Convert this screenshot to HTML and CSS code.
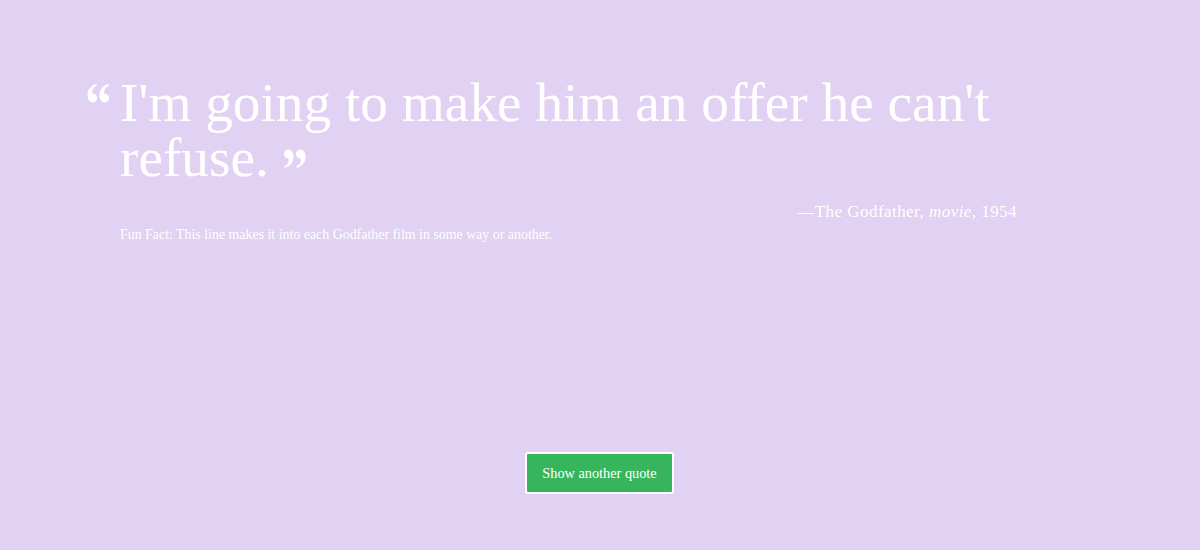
FILE: index.html
```html
<!DOCTYPE html>
<html>
<head>
<meta charset="utf-8">
<link rel="stylesheet" href="styles.css">
</head>
<body>
<main class="page">
  <section class="quote-box">
    <div class="quote-row">
      <svg class="q-left" viewBox="0 0 22 18" width="23" height="19"><path fill="#fff" d="M5 7.5C5 4.5 7 2.5 9.5 1.5L8.7 0C4 1.6 0.5 5 0.5 10.5C0.5 14.8 2.5 17.5 5.3 17.5C7.8 17.5 9.6 15.7 9.6 13.3C9.6 10.9 7.9 9.2 5.6 9.2C5.3 9.2 5 9.25 5 9.3Z M16.5 7.5C16.5 4.5 18.5 2.5 21 1.5L20.2 0C15.5 1.6 12 5 12 10.5C12 14.8 14 17.5 16.8 17.5C19.3 17.5 21.1 15.7 21.1 13.3C21.1 10.9 19.4 9.2 17.1 9.2C16.8 9.2 16.5 9.25 16.5 9.3Z"/></svg>
      <div class="quote-body">
        <p class="quote-text">I'm going to make him an offer he can't refuse.<svg class="q-right" viewBox="0 0 22 18" width="23" height="19"><path fill="#fff" transform="rotate(180 11 9)" d="M5 7.5C5 4.5 7 2.5 9.5 1.5L8.7 0C4 1.6 0.5 5 0.5 10.5C0.5 14.8 2.5 17.5 5.3 17.5C7.8 17.5 9.6 15.7 9.6 13.3C9.6 10.9 7.9 9.2 5.6 9.2C5.3 9.2 5 9.25 5 9.3Z M16.5 7.5C16.5 4.5 18.5 2.5 21 1.5L20.2 0C15.5 1.6 12 5 12 10.5C12 14.8 14 17.5 16.8 17.5C19.3 17.5 21.1 15.7 21.1 13.3C21.1 10.9 19.4 9.2 17.1 9.2C16.8 9.2 16.5 9.25 16.5 9.3Z"/></svg></p>
        <p class="attribution">—The Godfather, <em>movie</em>, 1954</p>
        <p class="fun-fact">Fun Fact: This line makes it into each Godfather film in some way or another.</p>
      </div>
    </div>
  </section>
  <div class="actions">
    <button class="btn">Show another quote</button>
  </div>
</main>
</body>
</html>
```

FILE: styles.css
```css
html, body {
  margin: 0;
  padding: 0;
  height: 100%;
}
body {
  background: #e1d1f2;
  color: #fff;
  font-family: "Liberation Serif", "DejaVu Serif", serif;
}
.page {
  display: flex;
  flex-direction: column;
  height: 550px;
}
.quote-box {
  padding: 75px 183px 0 87px;
}
.quote-row {
  display: flex;
  align-items: flex-start;
}
.q-left {
  flex: none;
  margin-top: 9px;
  margin-right: 10px;
}
.quote-body {
  flex: 1;
}
.quote-text {
  margin: 0;
  font-size: 55.3px;
  line-height: 55px;
  font-weight: 400;
}
.q-right {
  margin-left: 14px;
  vertical-align: 8px;
}
.attribution {
  margin: 16px 0 0;
  text-align: right;
  font-size: 17px;
  letter-spacing: 0.45px;
  line-height: 22px;
}
.attribution em {
  font-style: italic;
}
.fun-fact {
  margin: 2px 0 0;
  font-size: 13.9px;
  line-height: 20px;
}
.actions {
  margin-top: auto;
  padding-bottom: 56px;
  display: flex;
  justify-content: center;
}
.btn {
  width: 149px;
  height: 42px;
  background: #36b55c;
  color: #fff;
  border: 2px solid #fff;
  border-radius: 3px;
  font-family: "Liberation Serif", "DejaVu Serif", serif;
  font-size: 14.3px;
  margin-left: -1px;
  cursor: pointer;
}
```
